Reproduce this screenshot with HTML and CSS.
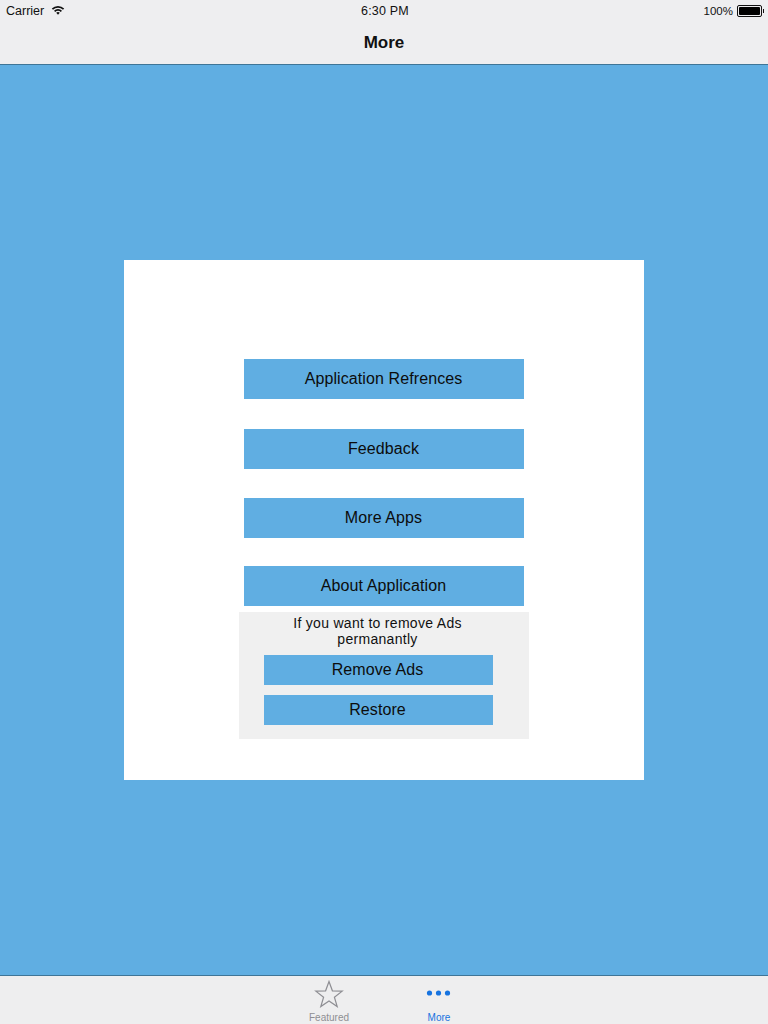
FILE: index.html
```html
<!DOCTYPE html>
<html lang="en">
<head>
    <meta charset="UTF-8">
    <title>More</title>
    <link rel="stylesheet" href="styles.css">
</head>
<body>
    <header class="top-bar">
        <div class="status-bar">
            <div class="status-left">
                <span>Carrier</span>
                <svg class="wifi-icon" width="14" height="10" viewBox="0 0 14 10">
                    <path d="M0.8 3.6 A8.6 8.6 0 0 1 13.2 3.6 L12 4.8 A6.9 6.9 0 0 0 2 4.8 Z" fill="#111"/>
                    <path d="M3 5.7 A5.6 5.6 0 0 1 11 5.7 L9.8 6.9 A3.9 3.9 0 0 0 4.2 6.9 Z" fill="#111"/>
                    <path d="M5.2 7.8 A2.6 2.6 0 0 1 8.8 7.8 L7 9.7 Z" fill="#111"/>
                </svg>
            </div>
            <div class="status-time">6:30 PM</div>
            <div class="status-right">
                <span>100%</span>
                <div class="battery"><div class="battery-fill"></div></div>
                <div class="battery-tip"></div>
            </div>
        </div>
        <div class="nav-title">More</div>
    </header>

    <main class="content">
        <div class="card">
            <button class="menu-btn btn-first">Application Refrences</button>
            <button class="menu-btn btn-second">Feedback</button>
            <button class="menu-btn btn-third">More Apps</button>
            <button class="menu-btn">About Application</button>
            <div class="ads-panel">
                <p class="ads-text">If you want to remove Ads permanantly</p>
                <button class="ads-btn">Remove Ads</button>
                <button class="ads-btn">Restore</button>
            </div>
        </div>
    </main>

    <footer class="tab-bar">
        <div class="tab-item">
            <svg class="tab-icon" width="30" height="28" viewBox="0 0 30 28">
                <path d="M15 1.5 L18.4 10.8 L28.2 11.1 L20.4 17.2 L23.2 26.6 L15 21 L6.8 26.6 L9.6 17.2 L1.8 11.1 L11.6 10.8 Z" fill="none" stroke="#8e8e93" stroke-width="1.2"/>
            </svg>
            <span class="tab-label">Featured</span>
        </div>
        <div class="tab-item tab-active">
            <svg class="tab-icon" width="30" height="28" viewBox="0 0 30 28">
                <circle cx="5.5" cy="13" r="2.6" fill="#1673e0"/>
                <circle cx="14.5" cy="13" r="2.6" fill="#1673e0"/>
                <circle cx="23.5" cy="13" r="2.6" fill="#1673e0"/>
            </svg>
            <span class="tab-label">More</span>
        </div>
    </footer>
</body>
</html>
```

FILE: styles.css
```css
/* Page frame */
body {
    margin: 0;
    height: 1024px;
    overflow: hidden;
    display: flex;
    flex-direction: column;
    background-color: #60aee2;
    color: #0c0c0c;
    font-family: "Liberation Sans", Arial, sans-serif;
}

/* Status bar and nav bar */
.top-bar {
    height: 64px;
    background-color: #eeeef0;
    border-bottom: 1px solid #3f7597;
}
.status-bar {
    height: 21px;
    padding: 0 4px 0 6px;
    display: grid;
    grid-template-columns: 1fr auto 1fr;
    align-items: center;
    font-size: 11.5px;
    color: #111;
}
.status-left {
    display: flex;
    align-items: center;
    gap: 7px;
    font-size: 12.5px;
}
.wifi-icon {
    margin-top: -1px;
}
.status-time {
    font-size: 12.5px;
    letter-spacing: 0.2px;
}
.status-right {
    display: flex;
    align-items: center;
    justify-content: flex-end;
}
.battery {
    width: 21px;
    height: 8px;
    margin-left: 4px;
    padding: 1px;
    border: 1px solid #111;
    border-radius: 2px;
}
.battery-fill {
    height: 100%;
    background-color: #000;
    border-radius: 1px;
}
.battery-tip {
    width: 1px;
    height: 4px;
    margin-left: 1px;
    background-color: #111;
}
.nav-title {
    margin-top: 2px;
    text-align: center;
    font-size: 17px;
    line-height: 40px;
    font-weight: bold;
    color: #111;
}

/* Blue area with the white card */
.content {
    height: 910px;
    display: flex;
    align-items: center;
    justify-content: center;
}
.card {
    width: 520px;
    height: 421px;
    padding-top: 99px;
    background-color: #fff;
    display: flex;
    flex-direction: column;
    align-items: center;
}

/* Buttons */
button {
    display: block;
    border: none;
    padding: 0;
    background-color: #60aee2;
    color: #0c0c0c;
    font-family: inherit;
    font-size: 16px;
    letter-spacing: 0.1px;
}
.menu-btn {
    flex: none;
    width: 280px;
    height: 40px;
    padding-right: 1px;
}
.btn-first {
    margin-bottom: 30px;
}
.btn-second {
    margin-bottom: 29px;
}
.btn-third {
    margin-bottom: 28px;
}

/* Remove ads box */
.ads-panel {
    flex: none;
    box-sizing: border-box;
    width: 290px;
    height: 127px;
    margin-top: 6px;
    padding: 3px 36px 0 25px;
    background-color: #f0f0f0;
}
.ads-text {
    margin: 0 0 8px;
    padding-right: 2px;
    text-align: center;
    font-size: 14px;
    line-height: 16px;
    letter-spacing: 0.3px;
    color: #111;
}
.ads-btn {
    width: 229px;
    height: 30px;
    font-size: 16px;
    margin-bottom: 10px;
    padding-right: 2px;
}

/* Bottom tab bar */
.tab-bar {
    flex: 1;
    border-top: 1px solid #3f7597;
    background-color: #eeeeef;
    display: flex;
    justify-content: center;
    gap: 60px;
}
.tab-item {
    width: 50px;
    display: flex;
    flex-direction: column;
    align-items: center;
    color: #8e8e93;
}
.tab-active {
    color: #1673e0;
}
.tab-icon {
    margin-top: 4px;
    flex: none;
}
.tab-label {
    font-size: 10px;
    line-height: 12px;
    margin-top: 4px;
}
```
